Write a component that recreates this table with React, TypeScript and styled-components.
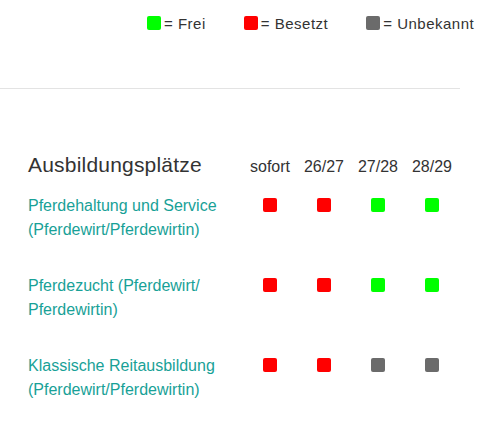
import React from 'react';
import styled, {createGlobalStyle} from "styled-components";

type Status = "frei" | "besetzt" | "unbekannt";

const statusColor: Record<Status, string> = {
  frei: "#00ff00",
  besetzt: "#ff0000",
  unbekannt: "#6b6b6b",
};

const years = ["sofort", "26/27", "27/28", "28/29"];

const rows: { lines: string[]; places: Status[] }[] = [
  {lines: ["Pferdehaltung und Service", "(Pferdewirt/Pferdewirtin)"], places: ["besetzt", "besetzt", "frei", "frei"]},
  {lines: ["Pferdezucht (Pferdewirt/", "Pferdewirtin)"], places: ["besetzt", "besetzt", "frei", "frei"]},
  {lines: ["Klassische Reitausbildung", "(Pferdewirt/Pferdewirtin)"], places: ["besetzt", "besetzt", "unbekannt", "unbekannt"]},
];

const App = () => {
  return (
    <>
      <GlobalStyle/>
      <StyledPage>
        <Legend>
          <LegendItem><Dot $status="frei"/>= Frei</LegendItem>
          <LegendItem><Dot $status="besetzt"/>= Besetzt</LegendItem>
          <LegendItem><Dot $status="unbekannt"/>= Unbekannt</LegendItem>
        </Legend>
        <Divider/>
        <Table>
          <Title>Ausbildungsplätze</Title>
          {years.map((year) => <YearHead key={year}>{year}</YearHead>)}
          {rows.map((row, index) => (
            <React.Fragment key={index}>
              <Course>
                {row.lines.map((line) => <span key={line}>{line}</span>)}
              </Course>
              {row.places.map((status, i) => (
                <Cell key={i}><Dot $status={status}/></Cell>
              ))}
            </React.Fragment>
          ))}
        </Table>
      </StyledPage>
    </>
  );
};

export default App;

const GlobalStyle = createGlobalStyle`
  body {
    margin: 0;
    background: #ffffff;
    font-family: "Liberation Sans", Arial, sans-serif;
    overflow: hidden;
  }
`;

const StyledPage = styled.main`
  width: 490px;
  height: 422px;
`;

const Legend = styled.div`
  display: flex;
  align-items: center;
  gap: 38px;
  padding: 16px 0 0 147px;
  height: 14px;
  white-space: nowrap;
`;

const LegendItem = styled.span`
  display: flex;
  align-items: center;
  gap: 3px;
  font-size: 15px;
  letter-spacing: 0.5px;
  color: #333333;
`;

const Dot = styled.span<{ $status: Status }>`
  display: inline-block;
  width: 14px;
  height: 14px;
  border-radius: 2px;
  background-color: ${({$status}) => statusColor[$status]};
`;

const Divider = styled.hr`
  margin: 58px 0 0;
  width: 460px;
  border: 0;
  border-top: 1px solid #e3e3e3;
`;

const Table = styled.div`
  display: grid;
  grid-template-columns: 215px repeat(4, 54px);
  grid-template-rows: 48px;
  grid-auto-rows: 80px;
  margin: 57px 0 0 28px;
`;

const Title = styled.h2`
  margin: 0;
  padding-top: 7px;
  font-size: 21px;
  font-weight: normal;
  letter-spacing: 0.2px;
  color: #333333;
  line-height: 24px;
`;

const YearHead = styled.div`
  padding-top: 9px;
  text-align: center;
  font-size: 16px;
  color: #333333;
  line-height: 24px;
`;

const Course = styled.div`
  display: flex;
  flex-direction: column;
  font-size: 16px;
  line-height: 24px;
  color: #18a197;
  white-space: nowrap;
`;

const Cell = styled.div`
  display: flex;
  justify-content: center;
  padding-top: 4px;
`;
